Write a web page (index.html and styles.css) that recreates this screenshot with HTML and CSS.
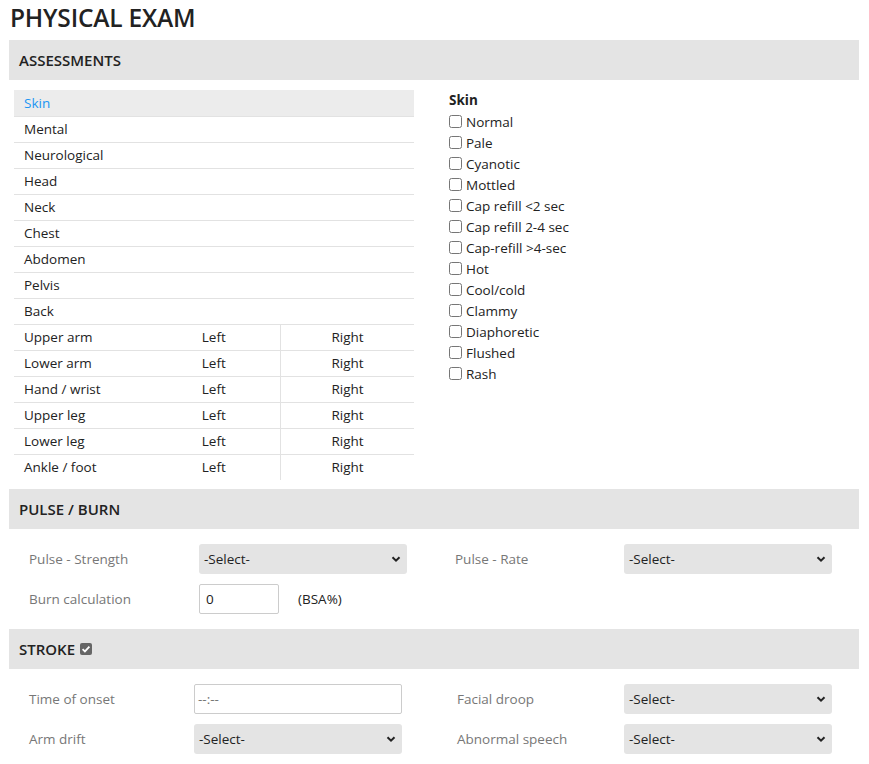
FILE: index.html
```html
<!DOCTYPE html>
<html>
<head>
<meta charset="utf-8">
<link rel="stylesheet" href="styles.css">
</head>
<body>
<h1 class="page-title">PHYSICAL EXAM</h1>

<section class="section">
  <div class="section-head">ASSESSMENTS</div>
  <div class="assess">
    <table class="parts">
      <tr class="active"><td colspan="3">Skin</td></tr>
      <tr><td colspan="3">Mental</td></tr>
      <tr><td colspan="3">Neurological</td></tr>
      <tr><td colspan="3">Head</td></tr>
      <tr><td colspan="3">Neck</td></tr>
      <tr><td colspan="3">Chest</td></tr>
      <tr><td colspan="3">Abdomen</td></tr>
      <tr><td colspan="3">Pelvis</td></tr>
      <tr><td colspan="3">Back</td></tr>
      <tr><td>Upper arm</td><td class="side">Left</td><td class="side right">Right</td></tr>
      <tr><td>Lower arm</td><td class="side">Left</td><td class="side right">Right</td></tr>
      <tr><td>Hand / wrist</td><td class="side">Left</td><td class="side right">Right</td></tr>
      <tr><td>Upper leg</td><td class="side">Left</td><td class="side right">Right</td></tr>
      <tr><td>Lower leg</td><td class="side">Left</td><td class="side right">Right</td></tr>
      <tr class="last"><td>Ankle / foot</td><td class="side">Left</td><td class="side right">Right</td></tr>
    </table>
    <div class="checks">
      <div class="checks-title">Skin</div>
      <label class="check"><input type="checkbox"><span>Normal</span></label>
      <label class="check"><input type="checkbox"><span>Pale</span></label>
      <label class="check"><input type="checkbox"><span>Cyanotic</span></label>
      <label class="check"><input type="checkbox"><span>Mottled</span></label>
      <label class="check"><input type="checkbox"><span>Cap refill &lt;2 sec</span></label>
      <label class="check"><input type="checkbox"><span>Cap refill 2-4 sec</span></label>
      <label class="check"><input type="checkbox"><span>Cap-refill &gt;4-sec</span></label>
      <label class="check"><input type="checkbox"><span>Hot</span></label>
      <label class="check"><input type="checkbox"><span>Cool/cold</span></label>
      <label class="check"><input type="checkbox"><span>Clammy</span></label>
      <label class="check"><input type="checkbox"><span>Diaphoretic</span></label>
      <label class="check"><input type="checkbox"><span>Flushed</span></label>
      <label class="check"><input type="checkbox"><span>Rash</span></label>
    </div>
  </div>
</section>

<section class="section">
  <div class="section-head">PULSE / BURN</div>
  <div class="form-grid pulse">
    <div class="half">
      <div class="field">
        <span class="lbl">Pulse - Strength</span>
        <div class="sel">-Select-<svg viewBox="0 0 10 10"><path d="M1.5 3.2 5 6.7 8.5 3.2" /></svg></div>
      </div>
      <div class="field">
        <span class="lbl">Burn calculation</span>
        <div class="burn"><div class="txt small">0</div><span class="unit">(BSA%)</span></div>
      </div>
    </div>
    <div class="half">
      <div class="field">
        <span class="lbl">Pulse - Rate</span>
        <div class="sel">-Select-<svg viewBox="0 0 10 10"><path d="M1.5 3.2 5 6.7 8.5 3.2" /></svg></div>
      </div>
    </div>
  </div>
</section>

<section class="section">
  <div class="section-head">STROKE <span class="cb-icon"><svg viewBox="0 0 12 12"><path d="M2.6 6.2 4.9 8.4 9.4 3.6" /></svg></span></div>
  <div class="form-grid stroke">
    <div class="half">
      <div class="field">
        <span class="lbl">Time of onset</span>
        <div class="txt time">--:--</div>
      </div>
      <div class="field">
        <span class="lbl">Arm drift</span>
        <div class="sel">-Select-<svg viewBox="0 0 10 10"><path d="M1.5 3.2 5 6.7 8.5 3.2" /></svg></div>
      </div>
    </div>
    <div class="half">
      <div class="field">
        <span class="lbl">Facial droop</span>
        <div class="sel">-Select-<svg viewBox="0 0 10 10"><path d="M1.5 3.2 5 6.7 8.5 3.2" /></svg></div>
      </div>
      <div class="field">
        <span class="lbl">Abnormal speech</span>
        <div class="sel">-Select-<svg viewBox="0 0 10 10"><path d="M1.5 3.2 5 6.7 8.5 3.2" /></svg></div>
      </div>
    </div>
  </div>
</section>
</body>
</html>
```

FILE: styles.css
```css
* { box-sizing: border-box; }
html, body { background: #fff; }
body {
  margin: 0;
  padding: 0 10px 0 9px;
  font-family: "Open Sans", "Noto Sans", sans-serif;
  font-size: 13.5px;
  color: #222;
  width: 869px;
}
.page-title {
  margin: 0;
  padding: 1px 0 0 1px;
  height: 40px;
  font-size: 24.5px;
  font-weight: 600;
  color: #222;
  letter-spacing: -0.2px;
}
.section-head {
  background: #e4e4e4;
  height: 40px;
  display: flex;
  align-items: center;
  padding-left: 10px;
  font-size: 15px;
  font-weight: 600;
  color: #222;
  gap: 5px;
}
.assess {
  display: flex;
  padding: 10px 0 9px 5px;
}
.parts {
  width: 400px;
  border-collapse: collapse;
  table-layout: fixed;
}
.parts td {
  height: 26px;
  padding: 0 10px;
  border-bottom: 1px solid #e2e2e2;
  vertical-align: middle;
  color: #222;
}
.parts tr.active td { background: #ececec; color: #2196f3; }
.parts tr.last td { border-bottom: none; }
.parts td.side { text-align: center; }
.parts td.right { border-left: 1px solid #e2e2e2; }
.checks {
  padding: 2px 0 0 35px;
  display: flex;
  flex-direction: column;
}
.checks-title { font-weight: 700; height: 19px; line-height: 17px; }
.check {
  display: flex;
  align-items: center;
  height: 21px;
  gap: 4px;
}
.check input {
  margin: 0;
  width: 13px;
  height: 13px;
}
.form-grid {
  display: flex;
  padding: 15px 0 15px 0;
}
.half {
  width: 425px;
  display: flex;
  flex-direction: column;
  gap: 10px;
}
.field {
  display: flex;
  align-items: center;
  height: 30px;
}
.lbl { color: #777; }
.pulse .half:first-child .field { padding-left: 20px; }
.pulse .half:first-child .lbl { width: 170px; }
.pulse .half:last-child .field { padding-left: 21px; }
.pulse .half:last-child .lbl { width: 169px; }
.stroke .half:first-child .field { padding-left: 20px; }
.stroke .half:first-child .lbl { width: 165px; }
.stroke .half:last-child .field { padding-left: 23px; }
.stroke .half:last-child .lbl { width: 167px; }
.sel {
  width: 208px;
  height: 30px;
  background: #e4e4e4;
  border-radius: 3px;
  display: flex;
  align-items: center;
  justify-content: space-between;
  padding: 0 6px 0 5px;
  color: #222;
}
.sel svg { width: 10px; height: 10px; }
.sel svg path { fill: none; stroke: #222; stroke-width: 2; }
.txt {
  height: 30px;
  border: 1px solid #ccc;
  border-radius: 2px;
  display: flex;
  align-items: center;
  padding: 0 6px;
  background: #fff;
}
.small { width: 80px; }
.time { width: 208px; color: #757575; padding-left: 3px; }
.burn { display: flex; align-items: center; }
.unit { margin-left: 19px; }
.cb-icon {
  display: inline-flex;
  width: 12px;
  height: 12px;
  background: #666;
  border-radius: 2px;
}
.cb-icon svg { width: 12px; height: 12px; }
.cb-icon path { fill: none; stroke: #fff; stroke-width: 1.8; }
```
